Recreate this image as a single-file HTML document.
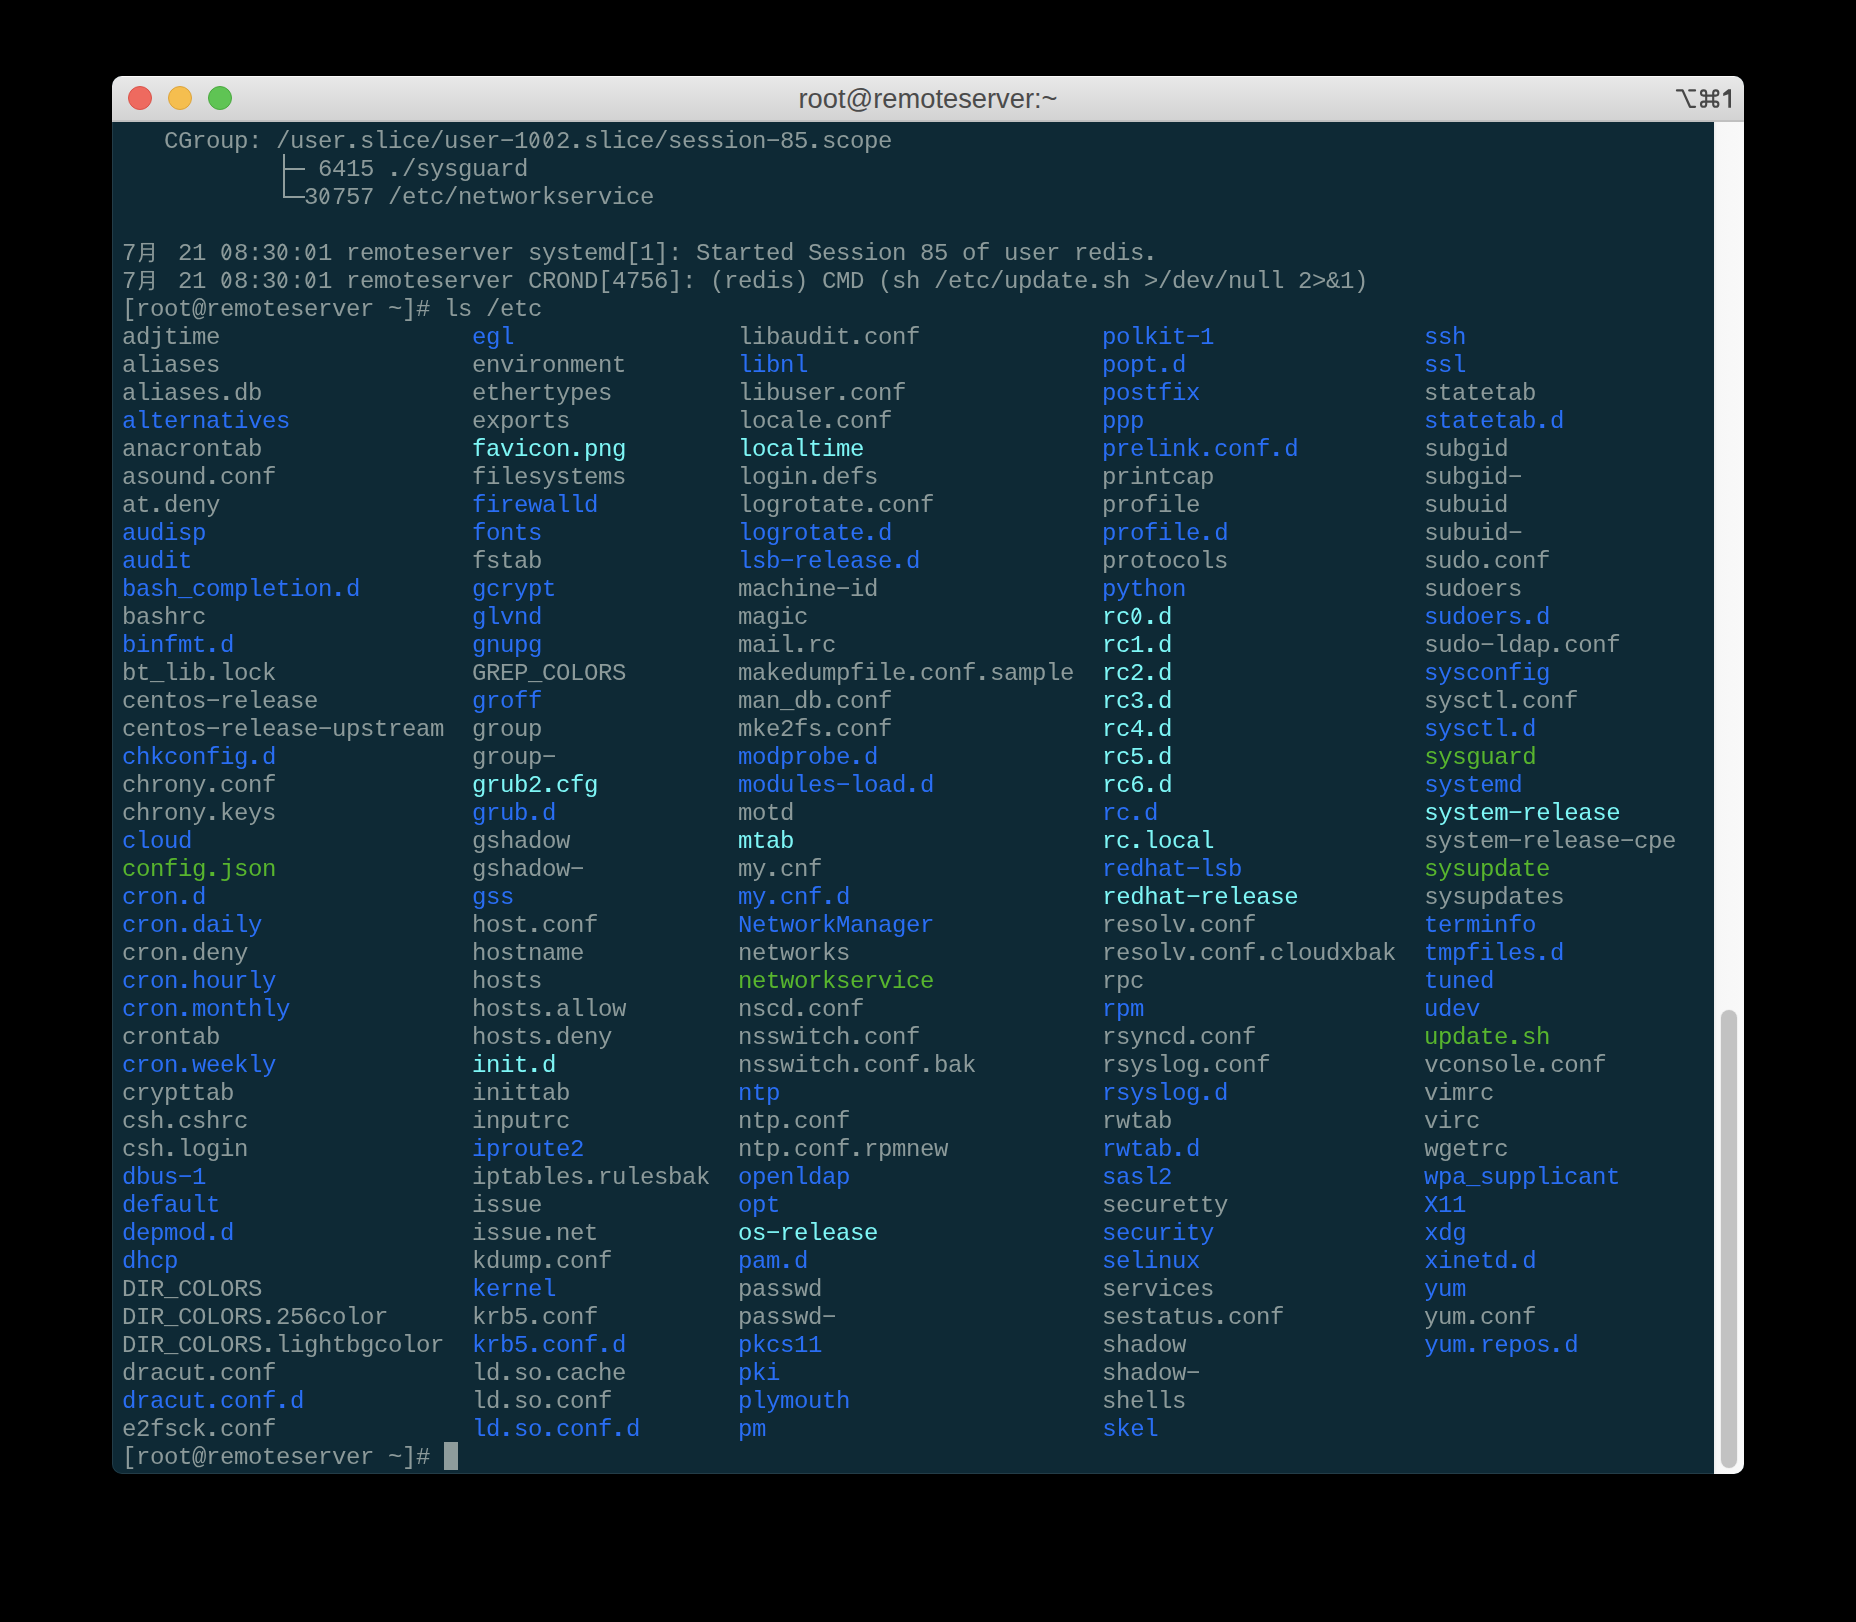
<!DOCTYPE html>
<html><head><meta charset="utf-8">
<style>
.ov{pointer-events:none;}
.wb{position:absolute;left:0;top:0;right:0;bottom:0;border:1px solid rgba(255,255,255,0.09);border-radius:10px;box-sizing:border-box;}
html,body{margin:0;padding:0;}
body{width:1856px;height:1622px;background:#000;position:relative;overflow:hidden;}
.win{position:absolute;left:112px;top:76px;width:1632px;height:1398px;border-radius:10px;overflow:hidden;background:#0e2935;}
.title{position:absolute;left:0;top:0;width:1632px;height:46px;background:linear-gradient(#e8e8e8,#d2d2d2);border-top:1px solid #fbfbfb;box-sizing:border-box;}
.title .bl{position:absolute;left:0;right:0;bottom:0;height:2px;background:#c0c0c0;}
.dot{position:absolute;top:9px;width:24px;height:24px;border-radius:50%;box-sizing:border-box;}
.d1{left:16px;background:#ee6a5f;border:1px solid #d9534a;}
.d2{left:56px;background:#f5be4f;border:1px solid #dca33b;}
.d3{left:96px;background:#5fc454;border:1px solid #4aa83f;}
.ttl{position:absolute;left:0;width:1632px;top:0;height:43px;line-height:43px;text-align:center;font-family:"Liberation Sans",sans-serif;font-size:27.3px;color:#4b4b4b;}
.kbd{position:absolute;right:12px;top:0;height:45px;}
.term{position:absolute;left:0;top:46px;width:1602px;height:1352px;background:#0e2935;}
.scroll{position:absolute;left:1602px;top:46px;width:30px;height:1352px;background:linear-gradient(90deg,#ececec 0px,#f7f7f7 3px,#f9f9f9 100%);box-sizing:border-box;}
.thumb{position:absolute;left:7px;top:888px;width:16px;height:458px;border-radius:8px;background:#c2c2c2;box-shadow:0 0 0 1px rgba(0,0,0,0.03);}
.txt{position:absolute;left:10px;top:6px;font-family:"Liberation Mono",monospace;font-size:24px;letter-spacing:-0.4023px;color:#8c9a9a;will-change:transform;}
.r{height:28px;line-height:28px;white-space:pre;}
b{font-weight:normal;}
.b{color:#2a6ef4;}
.c{color:#7ef6f6;}
.x{color:#58b52e;}
.z{vertical-align:top;position:relative;top:-2px;overflow:visible;}
.cur{display:inline-block;width:14px;height:28px;vertical-align:top;position:relative;top:-2px;background:#8e9c9c;}
</style></head><body>
<svg width="0" height="0" style="position:absolute"><defs><symbol id="zr" viewBox="0 0 14 28" overflow="visible"><ellipse cx="6.4" cy="13.9" rx="4.0" ry="7.4" fill="none" stroke="currentColor" stroke-width="2"/><path d="M3.9,18.3 L9,9.4" stroke="currentColor" stroke-width="1.5" fill="none"/></symbol><symbol id="pd" viewBox="0 0 14 28" overflow="visible"><rect x="4.3" y="18" width="3.9" height="4" fill="currentColor"/></symbol></defs></svg>
<div class="win">
 <div class="title">
  <div class="bl"></div>
  <div class="dot d1"></div><div class="dot d2"></div><div class="dot d3"></div>
  <div class="ttl">root@remoteserver:~</div>
 </div>
 <div class="term">
  <div class="txt">
<div class="r">   CGroup: /user<svg class="z" width="14" height="28"><use href="#pd"/></svg>slice/user−1<svg class="z" width="14" height="28"><use href="#zr"/></svg><svg class="z" width="14" height="28"><use href="#zr"/></svg>2<svg class="z" width="14" height="28"><use href="#pd"/></svg>slice/session−85<svg class="z" width="14" height="28"><use href="#pd"/></svg>scope</div>
<div class="r">              6415 <svg class="z" width="14" height="28"><use href="#pd"/></svg>/sysguard</div>
<div class="r">             3<svg class="z" width="14" height="28"><use href="#zr"/></svg>757 /etc/networkservice</div>
<div class="r"> </div>
<div class="r">7   21 <svg class="z" width="14" height="28"><use href="#zr"/></svg>8:3<svg class="z" width="14" height="28"><use href="#zr"/></svg>:<svg class="z" width="14" height="28"><use href="#zr"/></svg>1 remoteserver systemd[1]: Started Session 85 of user redis<svg class="z" width="14" height="28"><use href="#pd"/></svg></div>
<div class="r">7   21 <svg class="z" width="14" height="28"><use href="#zr"/></svg>8:3<svg class="z" width="14" height="28"><use href="#zr"/></svg>:<svg class="z" width="14" height="28"><use href="#zr"/></svg>1 remoteserver CROND[4756]: (redis) CMD (sh /etc/update<svg class="z" width="14" height="28"><use href="#pd"/></svg>sh &gt;/dev/null 2&gt;&amp;1)</div>
<div class="r">[root@remoteserver ~]# ls /etc</div>
<div class="r">adjtime                  <b class="b">egl</b>                libaudit<svg class="z" width="14" height="28"><use href="#pd"/></svg>conf             <b class="b">polkit−1</b>               <b class="b">ssh</b></div>
<div class="r">aliases                  environment        <b class="b">libnl</b>                     <b class="b">popt<svg class="z" width="14" height="28"><use href="#pd"/></svg>d</b>                 <b class="b">ssl</b></div>
<div class="r">aliases<svg class="z" width="14" height="28"><use href="#pd"/></svg>db               ethertypes         libuser<svg class="z" width="14" height="28"><use href="#pd"/></svg>conf              <b class="b">postfix</b>                statetab</div>
<div class="r"><b class="b">alternatives</b>             exports            locale<svg class="z" width="14" height="28"><use href="#pd"/></svg>conf               <b class="b">ppp</b>                    <b class="b">statetab<svg class="z" width="14" height="28"><use href="#pd"/></svg>d</b></div>
<div class="r">anacrontab               <b class="c">favicon<svg class="z" width="14" height="28"><use href="#pd"/></svg>png</b>        <b class="c">localtime</b>                 <b class="b">prelink<svg class="z" width="14" height="28"><use href="#pd"/></svg>conf<svg class="z" width="14" height="28"><use href="#pd"/></svg>d</b>         subgid</div>
<div class="r">asound<svg class="z" width="14" height="28"><use href="#pd"/></svg>conf              filesystems        login<svg class="z" width="14" height="28"><use href="#pd"/></svg>defs                printcap               subgid−</div>
<div class="r">at<svg class="z" width="14" height="28"><use href="#pd"/></svg>deny                  <b class="b">firewalld</b>          logrotate<svg class="z" width="14" height="28"><use href="#pd"/></svg>conf            profile                subuid</div>
<div class="r"><b class="b">audisp</b>                   <b class="b">fonts</b>              <b class="b">logrotate<svg class="z" width="14" height="28"><use href="#pd"/></svg>d</b>               <b class="b">profile<svg class="z" width="14" height="28"><use href="#pd"/></svg>d</b>              subuid−</div>
<div class="r"><b class="b">audit</b>                    fstab              <b class="b">lsb−release<svg class="z" width="14" height="28"><use href="#pd"/></svg>d</b>             protocols              sudo<svg class="z" width="14" height="28"><use href="#pd"/></svg>conf</div>
<div class="r"><b class="b">bash_completion<svg class="z" width="14" height="28"><use href="#pd"/></svg>d</b>        <b class="b">gcrypt</b>             machine−id                <b class="b">python</b>                 sudoers</div>
<div class="r">bashrc                   <b class="b">glvnd</b>              magic                     <b class="c">rc<svg class="z" width="14" height="28"><use href="#zr"/></svg><svg class="z" width="14" height="28"><use href="#pd"/></svg>d</b>                  <b class="b">sudoers<svg class="z" width="14" height="28"><use href="#pd"/></svg>d</b></div>
<div class="r"><b class="b">binfmt<svg class="z" width="14" height="28"><use href="#pd"/></svg>d</b>                 <b class="b">gnupg</b>              mail<svg class="z" width="14" height="28"><use href="#pd"/></svg>rc                   <b class="c">rc1<svg class="z" width="14" height="28"><use href="#pd"/></svg>d</b>                  sudo−ldap<svg class="z" width="14" height="28"><use href="#pd"/></svg>conf</div>
<div class="r">bt_lib<svg class="z" width="14" height="28"><use href="#pd"/></svg>lock              GREP_COLORS        makedumpfile<svg class="z" width="14" height="28"><use href="#pd"/></svg>conf<svg class="z" width="14" height="28"><use href="#pd"/></svg>sample  <b class="c">rc2<svg class="z" width="14" height="28"><use href="#pd"/></svg>d</b>                  <b class="b">sysconfig</b></div>
<div class="r">centos−release           <b class="b">groff</b>              man_db<svg class="z" width="14" height="28"><use href="#pd"/></svg>conf               <b class="c">rc3<svg class="z" width="14" height="28"><use href="#pd"/></svg>d</b>                  sysctl<svg class="z" width="14" height="28"><use href="#pd"/></svg>conf</div>
<div class="r">centos−release−upstream  group              mke2fs<svg class="z" width="14" height="28"><use href="#pd"/></svg>conf               <b class="c">rc4<svg class="z" width="14" height="28"><use href="#pd"/></svg>d</b>                  <b class="b">sysctl<svg class="z" width="14" height="28"><use href="#pd"/></svg>d</b></div>
<div class="r"><b class="b">chkconfig<svg class="z" width="14" height="28"><use href="#pd"/></svg>d</b>              group−             <b class="b">modprobe<svg class="z" width="14" height="28"><use href="#pd"/></svg>d</b>                <b class="c">rc5<svg class="z" width="14" height="28"><use href="#pd"/></svg>d</b>                  <b class="x">sysguard</b></div>
<div class="r">chrony<svg class="z" width="14" height="28"><use href="#pd"/></svg>conf              <b class="c">grub2<svg class="z" width="14" height="28"><use href="#pd"/></svg>cfg</b>          <b class="b">modules−load<svg class="z" width="14" height="28"><use href="#pd"/></svg>d</b>            <b class="c">rc6<svg class="z" width="14" height="28"><use href="#pd"/></svg>d</b>                  <b class="b">systemd</b></div>
<div class="r">chrony<svg class="z" width="14" height="28"><use href="#pd"/></svg>keys              <b class="b">grub<svg class="z" width="14" height="28"><use href="#pd"/></svg>d</b>             motd                      <b class="b">rc<svg class="z" width="14" height="28"><use href="#pd"/></svg>d</b>                   <b class="c">system−release</b></div>
<div class="r"><b class="b">cloud</b>                    gshadow            <b class="c">mtab</b>                      <b class="c">rc<svg class="z" width="14" height="28"><use href="#pd"/></svg>local</b>               system−release−cpe</div>
<div class="r"><b class="x">config<svg class="z" width="14" height="28"><use href="#pd"/></svg>json</b>              gshadow−           my<svg class="z" width="14" height="28"><use href="#pd"/></svg>cnf                    <b class="b">redhat−lsb</b>             <b class="x">sysupdate</b></div>
<div class="r"><b class="b">cron<svg class="z" width="14" height="28"><use href="#pd"/></svg>d</b>                   <b class="b">gss</b>                <b class="b">my<svg class="z" width="14" height="28"><use href="#pd"/></svg>cnf<svg class="z" width="14" height="28"><use href="#pd"/></svg>d</b>                  <b class="c">redhat−release</b>         sysupdates</div>
<div class="r"><b class="b">cron<svg class="z" width="14" height="28"><use href="#pd"/></svg>daily</b>               host<svg class="z" width="14" height="28"><use href="#pd"/></svg>conf          <b class="b">NetworkManager</b>            resolv<svg class="z" width="14" height="28"><use href="#pd"/></svg>conf            <b class="b">terminfo</b></div>
<div class="r">cron<svg class="z" width="14" height="28"><use href="#pd"/></svg>deny                hostname           networks                  resolv<svg class="z" width="14" height="28"><use href="#pd"/></svg>conf<svg class="z" width="14" height="28"><use href="#pd"/></svg>cloudxbak  <b class="b">tmpfiles<svg class="z" width="14" height="28"><use href="#pd"/></svg>d</b></div>
<div class="r"><b class="b">cron<svg class="z" width="14" height="28"><use href="#pd"/></svg>hourly</b>              hosts              <b class="x">networkservice</b>            rpc                    <b class="b">tuned</b></div>
<div class="r"><b class="b">cron<svg class="z" width="14" height="28"><use href="#pd"/></svg>monthly</b>             hosts<svg class="z" width="14" height="28"><use href="#pd"/></svg>allow        nscd<svg class="z" width="14" height="28"><use href="#pd"/></svg>conf                 <b class="b">rpm</b>                    <b class="b">udev</b></div>
<div class="r">crontab                  hosts<svg class="z" width="14" height="28"><use href="#pd"/></svg>deny         nsswitch<svg class="z" width="14" height="28"><use href="#pd"/></svg>conf             rsyncd<svg class="z" width="14" height="28"><use href="#pd"/></svg>conf            <b class="x">update<svg class="z" width="14" height="28"><use href="#pd"/></svg>sh</b></div>
<div class="r"><b class="b">cron<svg class="z" width="14" height="28"><use href="#pd"/></svg>weekly</b>              <b class="c">init<svg class="z" width="14" height="28"><use href="#pd"/></svg>d</b>             nsswitch<svg class="z" width="14" height="28"><use href="#pd"/></svg>conf<svg class="z" width="14" height="28"><use href="#pd"/></svg>bak         rsyslog<svg class="z" width="14" height="28"><use href="#pd"/></svg>conf           vconsole<svg class="z" width="14" height="28"><use href="#pd"/></svg>conf</div>
<div class="r">crypttab                 inittab            <b class="b">ntp</b>                       <b class="b">rsyslog<svg class="z" width="14" height="28"><use href="#pd"/></svg>d</b>              vimrc</div>
<div class="r">csh<svg class="z" width="14" height="28"><use href="#pd"/></svg>cshrc                inputrc            ntp<svg class="z" width="14" height="28"><use href="#pd"/></svg>conf                  rwtab                  virc</div>
<div class="r">csh<svg class="z" width="14" height="28"><use href="#pd"/></svg>login                <b class="b">iproute2</b>           ntp<svg class="z" width="14" height="28"><use href="#pd"/></svg>conf<svg class="z" width="14" height="28"><use href="#pd"/></svg>rpmnew           <b class="b">rwtab<svg class="z" width="14" height="28"><use href="#pd"/></svg>d</b>                wgetrc</div>
<div class="r"><b class="b">dbus−1</b>                   iptables<svg class="z" width="14" height="28"><use href="#pd"/></svg>rulesbak  <b class="b">openldap</b>                  <b class="b">sasl2</b>                  <b class="b">wpa_supplicant</b></div>
<div class="r"><b class="b">default</b>                  issue              <b class="b">opt</b>                       securetty              <b class="b">X11</b></div>
<div class="r"><b class="b">depmod<svg class="z" width="14" height="28"><use href="#pd"/></svg>d</b>                 issue<svg class="z" width="14" height="28"><use href="#pd"/></svg>net          <b class="c">os−release</b>                <b class="b">security</b>               <b class="b">xdg</b></div>
<div class="r"><b class="b">dhcp</b>                     kdump<svg class="z" width="14" height="28"><use href="#pd"/></svg>conf         <b class="b">pam<svg class="z" width="14" height="28"><use href="#pd"/></svg>d</b>                     <b class="b">selinux</b>                <b class="b">xinetd<svg class="z" width="14" height="28"><use href="#pd"/></svg>d</b></div>
<div class="r">DIR_COLORS               <b class="b">kernel</b>             passwd                    services               <b class="b">yum</b></div>
<div class="r">DIR_COLORS<svg class="z" width="14" height="28"><use href="#pd"/></svg>256color      krb5<svg class="z" width="14" height="28"><use href="#pd"/></svg>conf          passwd−                   sestatus<svg class="z" width="14" height="28"><use href="#pd"/></svg>conf          yum<svg class="z" width="14" height="28"><use href="#pd"/></svg>conf</div>
<div class="r">DIR_COLORS<svg class="z" width="14" height="28"><use href="#pd"/></svg>lightbgcolor  <b class="b">krb5<svg class="z" width="14" height="28"><use href="#pd"/></svg>conf<svg class="z" width="14" height="28"><use href="#pd"/></svg>d</b>        <b class="b">pkcs11</b>                    shadow                 <b class="b">yum<svg class="z" width="14" height="28"><use href="#pd"/></svg>repos<svg class="z" width="14" height="28"><use href="#pd"/></svg>d</b></div>
<div class="r">dracut<svg class="z" width="14" height="28"><use href="#pd"/></svg>conf              ld<svg class="z" width="14" height="28"><use href="#pd"/></svg>so<svg class="z" width="14" height="28"><use href="#pd"/></svg>cache        <b class="b">pki</b>                       shadow−</div>
<div class="r"><b class="b">dracut<svg class="z" width="14" height="28"><use href="#pd"/></svg>conf<svg class="z" width="14" height="28"><use href="#pd"/></svg>d</b>            ld<svg class="z" width="14" height="28"><use href="#pd"/></svg>so<svg class="z" width="14" height="28"><use href="#pd"/></svg>conf         <b class="b">plymouth</b>                  shells</div>
<div class="r">e2fsck<svg class="z" width="14" height="28"><use href="#pd"/></svg>conf              <b class="b">ld<svg class="z" width="14" height="28"><use href="#pd"/></svg>so<svg class="z" width="14" height="28"><use href="#pd"/></svg>conf<svg class="z" width="14" height="28"><use href="#pd"/></svg>d</b>       <b class="b">pm</b>                        <b class="b">skel</b></div>
<div class="r">[root@remoteserver ~]# <span class="cur"></span></div>
  </div>
 </div>
 <div class="scroll"><div class="thumb"></div></div>
 <div class="wb"></div>
</div>
<svg class="ov" width="1856" height="1622" viewBox="0 0 1856 1622" style="position:absolute;left:0;top:0;">
<g fill="#8f9d9d">
<rect x="283" y="154" width="2" height="44"/>
<rect x="285" y="168" width="20" height="2"/>
<rect x="285" y="196" width="20" height="2"/>
</g>
<g fill="none" stroke="#8c9a9a" stroke-linecap="butt">
<g id="yue">
<path d="M141.6,243.7 H153.4" stroke-width="1.5"/>
<path d="M142,243 V255 Q141.8,259 139.3,262" stroke-width="1.8"/>
<path d="M153,243 V259.8 Q153,261.3 151.5,261.3 H148.8" stroke-width="1.8"/>
<path d="M143,249 H152.2" stroke-width="1.5"/>
<path d="M143,254.6 H152.2" stroke-width="1.5"/>
</g>
<use href="#yue" y="28"/>
</g>
<g fill="none" stroke="#474747" stroke-width="2.3" stroke-linecap="round" stroke-linejoin="round">
<path d="M1677,90.4 H1682.6 L1690,106.8 H1695"/>
<path d="M1689.3,90.4 H1695"/>
<path d="M1706.2,95.6 V92.8 A2.6,2.6 0 1 0 1703.6,95.6 H1715.8 A2.6,2.6 0 1 0 1713.2,92.8 V104.2 A2.6,2.6 0 1 0 1715.8,101.6 H1703.6 A2.6,2.6 0 1 0 1706.2,104.2 Z" stroke-width="2.1"/>
</g>
<path d="M1723.2,93.2 L1728.3,89.2 H1731 V107.7 H1728.3 V94.2 L1723.2,96 Z" fill="#474747"/>
</svg>
</body></html>
